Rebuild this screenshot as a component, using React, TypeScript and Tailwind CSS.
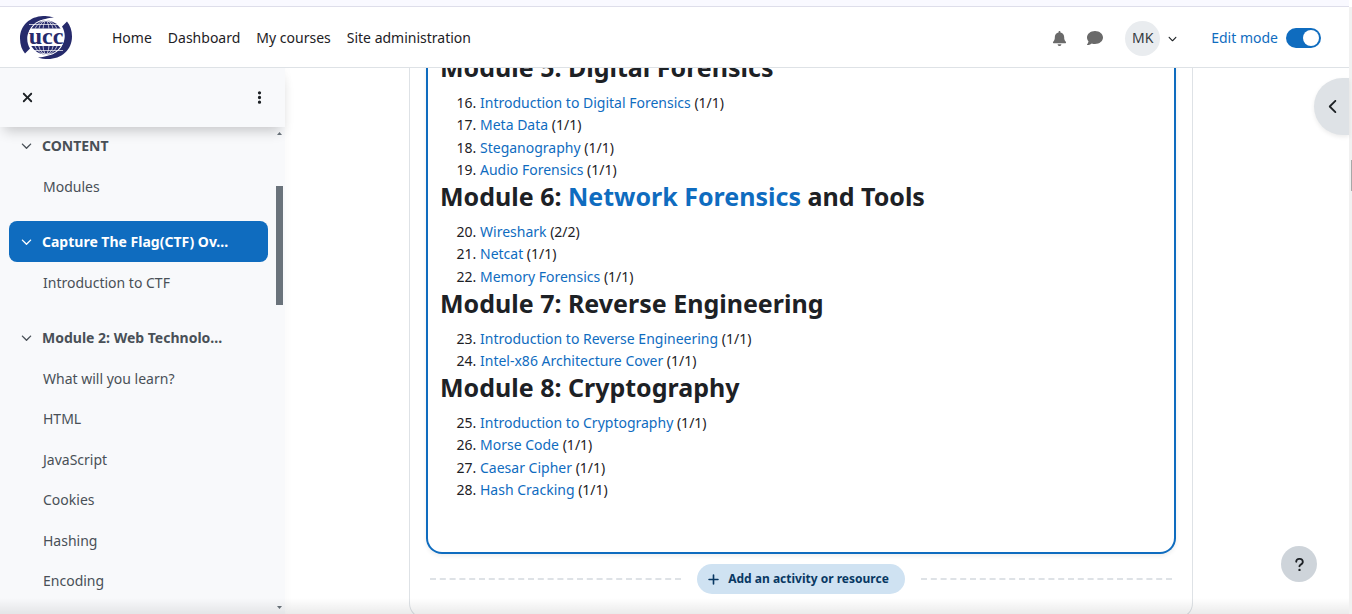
import React from "react";
import { FaBell, FaComment, FaPlus, FaQuestion, FaEllipsisVertical, FaXmark, FaChevronDown, FaChevronLeft } from "react-icons/fa6";

type Topic = { name: string; score: string };
type Module = { title: React.ReactNode; start: number; topics: Topic[] };

const modules: Module[] = [
  {
    title: "Module 5: Digital Forensics",
    start: 16,
    topics: [
      { name: "Introduction to Digital Forensics", score: "(1/1)" },
      { name: "Meta Data", score: "(1/1)" },
      { name: "Steganography", score: "(1/1)" },
      { name: "Audio Forensics", score: "(1/1)" },
    ],
  },
  {
    title: (
      <>
        Module 6: <a href="#network" className="text-[#0f6cbf]">Network Forensics</a> and Tools
      </>
    ),
    start: 20,
    topics: [
      { name: "Wireshark", score: "(2/2)" },
      { name: "Netcat", score: "(1/1)" },
      { name: "Memory Forensics", score: "(1/1)" },
    ],
  },
  {
    title: "Module 7: Reverse Engineering",
    start: 23,
    topics: [
      { name: "Introduction to Reverse Engineering", score: "(1/1)" },
      { name: "Intel-x86 Architecture Cover", score: "(1/1)" },
    ],
  },
  {
    title: "Module 8: Cryptography",
    start: 25,
    topics: [
      { name: "Introduction to Cryptography", score: "(1/1)" },
      { name: "Morse Code", score: "(1/1)" },
      { name: "Caesar Cipher", score: "(1/1)" },
      { name: "Hash Cracking", score: "(1/1)" },
    ],
  },
];

const sections = [
  { title: "CONTENT", active: false, items: ["Modules"] },
  { title: "Capture The Flag(CTF) Ov...", active: true, items: ["Introduction to CTF"] },
  {
    title: "Module 2: Web Technolo...",
    active: false,
    items: ["What will you learn?", "HTML", "JavaScript", "Cookies", "Hashing", "Encoding"],
  },
];

function Logo() {
  return (
    <svg viewBox="0 0 54 44" className="h-11 w-[54px]" role="img" aria-label="UCC">
      <defs>
        <clipPath id="caps">
          <path d="M0 0H54V12.500H0ZM0 30H54V44H0Z" />
        </clipPath>
      </defs>
      <g fill="#262a6b">
        <path d="M35 1.500C17 -4 1 6 1 22.500C1 29 3 34 6 37.500L11 32.500C3 19 13 3 35 1.500Z" />
        <path d="M35 1.500C17 -4 1 6 1 22.500C1 29 3 34 6 37.500L11 32.500C3 19 13 3 35 1.500Z" transform="rotate(180 27 21.500)" />
      </g>
      <circle cx="27" cy="21.500" r="18" fill="#fff" />
      <g clipPath="url(#caps)">
        <circle cx="27" cy="21.500" r="17" fill="#262a6b" />
        <g fill="none" stroke="#fff" strokeWidth="0.7">
          <ellipse cx="27" cy="21.500" rx="3.500" ry="17" />
          <ellipse cx="27" cy="21.500" rx="8.500" ry="17" />
          <ellipse cx="27" cy="21.500" rx="13" ry="17" />
          <path d="M10 8.500H44M10 34.500H44" />
        </g>
      </g>
      <text x="27" y="27.500" textAnchor="middle" fontFamily="Liberation Serif, serif" fontWeight="700" fontSize="24" fill="#262a6b">
        ucc
      </text>
    </svg>
  );
}

function Header() {
  return (
    <header className="z-20 flex h-[61px] shrink-0 items-center border-b border-[#dee2e6] bg-white pl-[19px] pr-7 pt-0.5">
      <a href="#home"><Logo /></a>
      <nav className="ml-[39px] flex flex-1 gap-4 text-[#1d2125]">
        <a href="#home">Home</a>
        <a href="#dashboard">Dashboard</a>
        <a href="#courses">My courses</a>
        <a href="#admin">Site administration</a>
      </nav>
      <button aria-label="Notifications" className="text-[15px] text-[#6a6a6a]"><FaBell /></button>
      <button aria-label="Messages" className="ml-5 text-base text-[#6a6a6a]"><FaComment /></button>
      <button aria-label="User menu" className="ml-[22px] flex items-center">
        <span className="flex size-[35px] items-center justify-center rounded-full bg-[#e9ecef] text-[#343a40]">MK</span>
        <FaChevronDown className="ml-2 size-[9px] text-[#1d2125]" />
      </button>
      <label htmlFor="edit-mode" className="ml-[34px] text-[#0f6cbf]">Edit mode</label>
      <input
        id="edit-mode"
        type="checkbox"
        defaultChecked
        className="ml-2 h-5 w-[35px] appearance-none rounded-full bg-[#0f6cbf] before:ml-[17px] before:mt-[2px] before:block before:size-4 before:rounded-full before:bg-white"
      />
    </header>
  );
}

function Sidebar() {
  return (
    <aside className="flex w-[285px] shrink-0 flex-col bg-[#f8f9fb] shadow-[0_0_10px_rgba(0,0,0,0.03)]">
      <div className="z-10 flex h-[59px] shrink-0 items-center justify-between bg-[#f8f9fb] pl-5 pr-[18px] shadow-[0_8px_12px_-4px_rgba(0,0,0,0.2)]">
        <button aria-label="Close drawer" className="text-[15px] text-[#1d2125]"><FaXmark /></button>
        <button aria-label="Options" className="text-[15px] text-[#1d2125]"><FaEllipsisVertical /></button>
      </div>
      <div className="flex min-h-0 flex-1 gap-2 overflow-hidden pl-[9px] pr-[2px]">
        <nav className="-mt-0.5 flex-1 text-[#495057]">
          {sections.map((s) => (
            <section key={s.title} className="mb-3.5">
              <div className={s.active ? "flex h-[41px] items-center rounded-lg bg-[#0f6cbf] pl-3 text-white" : "flex h-[41px] items-center pl-3"}>
                <FaChevronDown className="size-[11px]" />
                <a href="#section" className="ml-2.5 whitespace-nowrap font-bold">{s.title}</a>
              </div>
              <ul>
                {s.items.map((i) => (
                  <li key={i} className="flex items-center pl-[34px] odd:h-[41px] even:h-10">
                    <a href="#item">{i}</a>
                  </li>
                ))}
              </ul>
            </section>
          ))}
        </nav>
        <div aria-hidden="true" className="flex w-[7px] flex-col items-center justify-between pb-[5px] pt-[5px] text-[#6a737b]">
          <div className="flex w-full flex-col items-center gap-[51px]">
            <svg viewBox="0 0 5 3" className="h-[3px] w-[5px]"><path d="M0 3L2.500 0L5 3Z" fill="currentColor" /></svg>
            <div className="h-[119px] w-full bg-[#6a737b]" />
          </div>
          <svg viewBox="0 0 5 3" className="h-[3px] w-[5px]"><path d="M0 0L2.500 3L5 0Z" fill="currentColor" /></svg>
        </div>
      </div>
    </aside>
  );
}

function Course() {
  return (
    <main className="min-w-0 flex-1 overflow-hidden pr-8">
      <div className="mx-auto -mt-4 max-w-[784px] rounded-b-2xl border border-t-0 border-[#dee2e6] px-4 pb-6">
        <div className="rounded-b-2xl border-2 border-t-0 border-[#0f6cbf] px-3 pb-[51px] shadow-[0_2px_4px_rgba(0,0,0,0.07)]">
          {modules.map((m) => (
            <section key={m.start}>
              <h2 className="mb-2 text-[25px] font-bold leading-[31px] text-[#1d2125]">{m.title}</h2>
              <ol start={m.start} className="list-decimal pl-10">
                {m.topics.map((t) => (
                  <li key={t.name} className="odd:leading-[23px] even:leading-[22px]">
                    <a href="#topic" className="text-[#0f6cbf]">{t.name}</a> {t.score}
                  </li>
                ))}
              </ol>
            </section>
          ))}
        </div>
        <div className="mt-2.5 flex items-center gap-4 px-1">
          <div className="flex-1 border-t-2 border-dashed border-[#dee2e6]" />
          <button className="flex h-[30px] items-center gap-2 rounded-full bg-[#cfe2f2] pl-2.5 pr-4 text-xs font-bold text-[#083863]">
            <FaPlus className="size-[13px]" />
            Add an activity or resource
          </button>
          <div className="flex-1 border-t-2 border-dashed border-[#dee2e6]" />
        </div>
      </div>
    </main>
  );
}

export default function App() {
  return (
    <div className="relative flex h-screen overflow-hidden bg-white font-['Noto_Sans',sans-serif] text-sm text-[#1d2125]">
      <div className="flex min-w-0 flex-1 flex-col">
        <div className="h-[7px] shrink-0 border-b border-[#dedeea] bg-[#f9f9ff]" />
        <Header />
        <div className="flex min-h-0 flex-1">
          <Sidebar />
          <Course />
        </div>
      </div>
      <div aria-hidden="true" className="mt-[7px] flex w-[3px] shrink-0 justify-end bg-[#f1f1f1]">
        <div className="mt-[153px] h-[31px] w-px bg-[#a8a8a8]" />
      </div>
      <button aria-label="Open block drawer" className="absolute right-[3px] top-[78px] flex h-[57px] w-[35px] items-center justify-center rounded-l-full bg-[#dee2e6] pl-1 text-[15px] shadow-[0_2px_4px_rgba(0,0,0,0.08)]">
        <FaChevronLeft />
      </button>
      <button aria-label="Help" className="absolute bottom-8 right-[35px] flex size-9 items-center justify-center rounded-full bg-[#ced4da] text-[15px]">
        <FaQuestion />
      </button>
      <div aria-hidden="true" className="pointer-events-none absolute bottom-0 left-0 right-[3px] h-4 bg-gradient-to-b from-transparent to-black/8" />
    </div>
  );
}
